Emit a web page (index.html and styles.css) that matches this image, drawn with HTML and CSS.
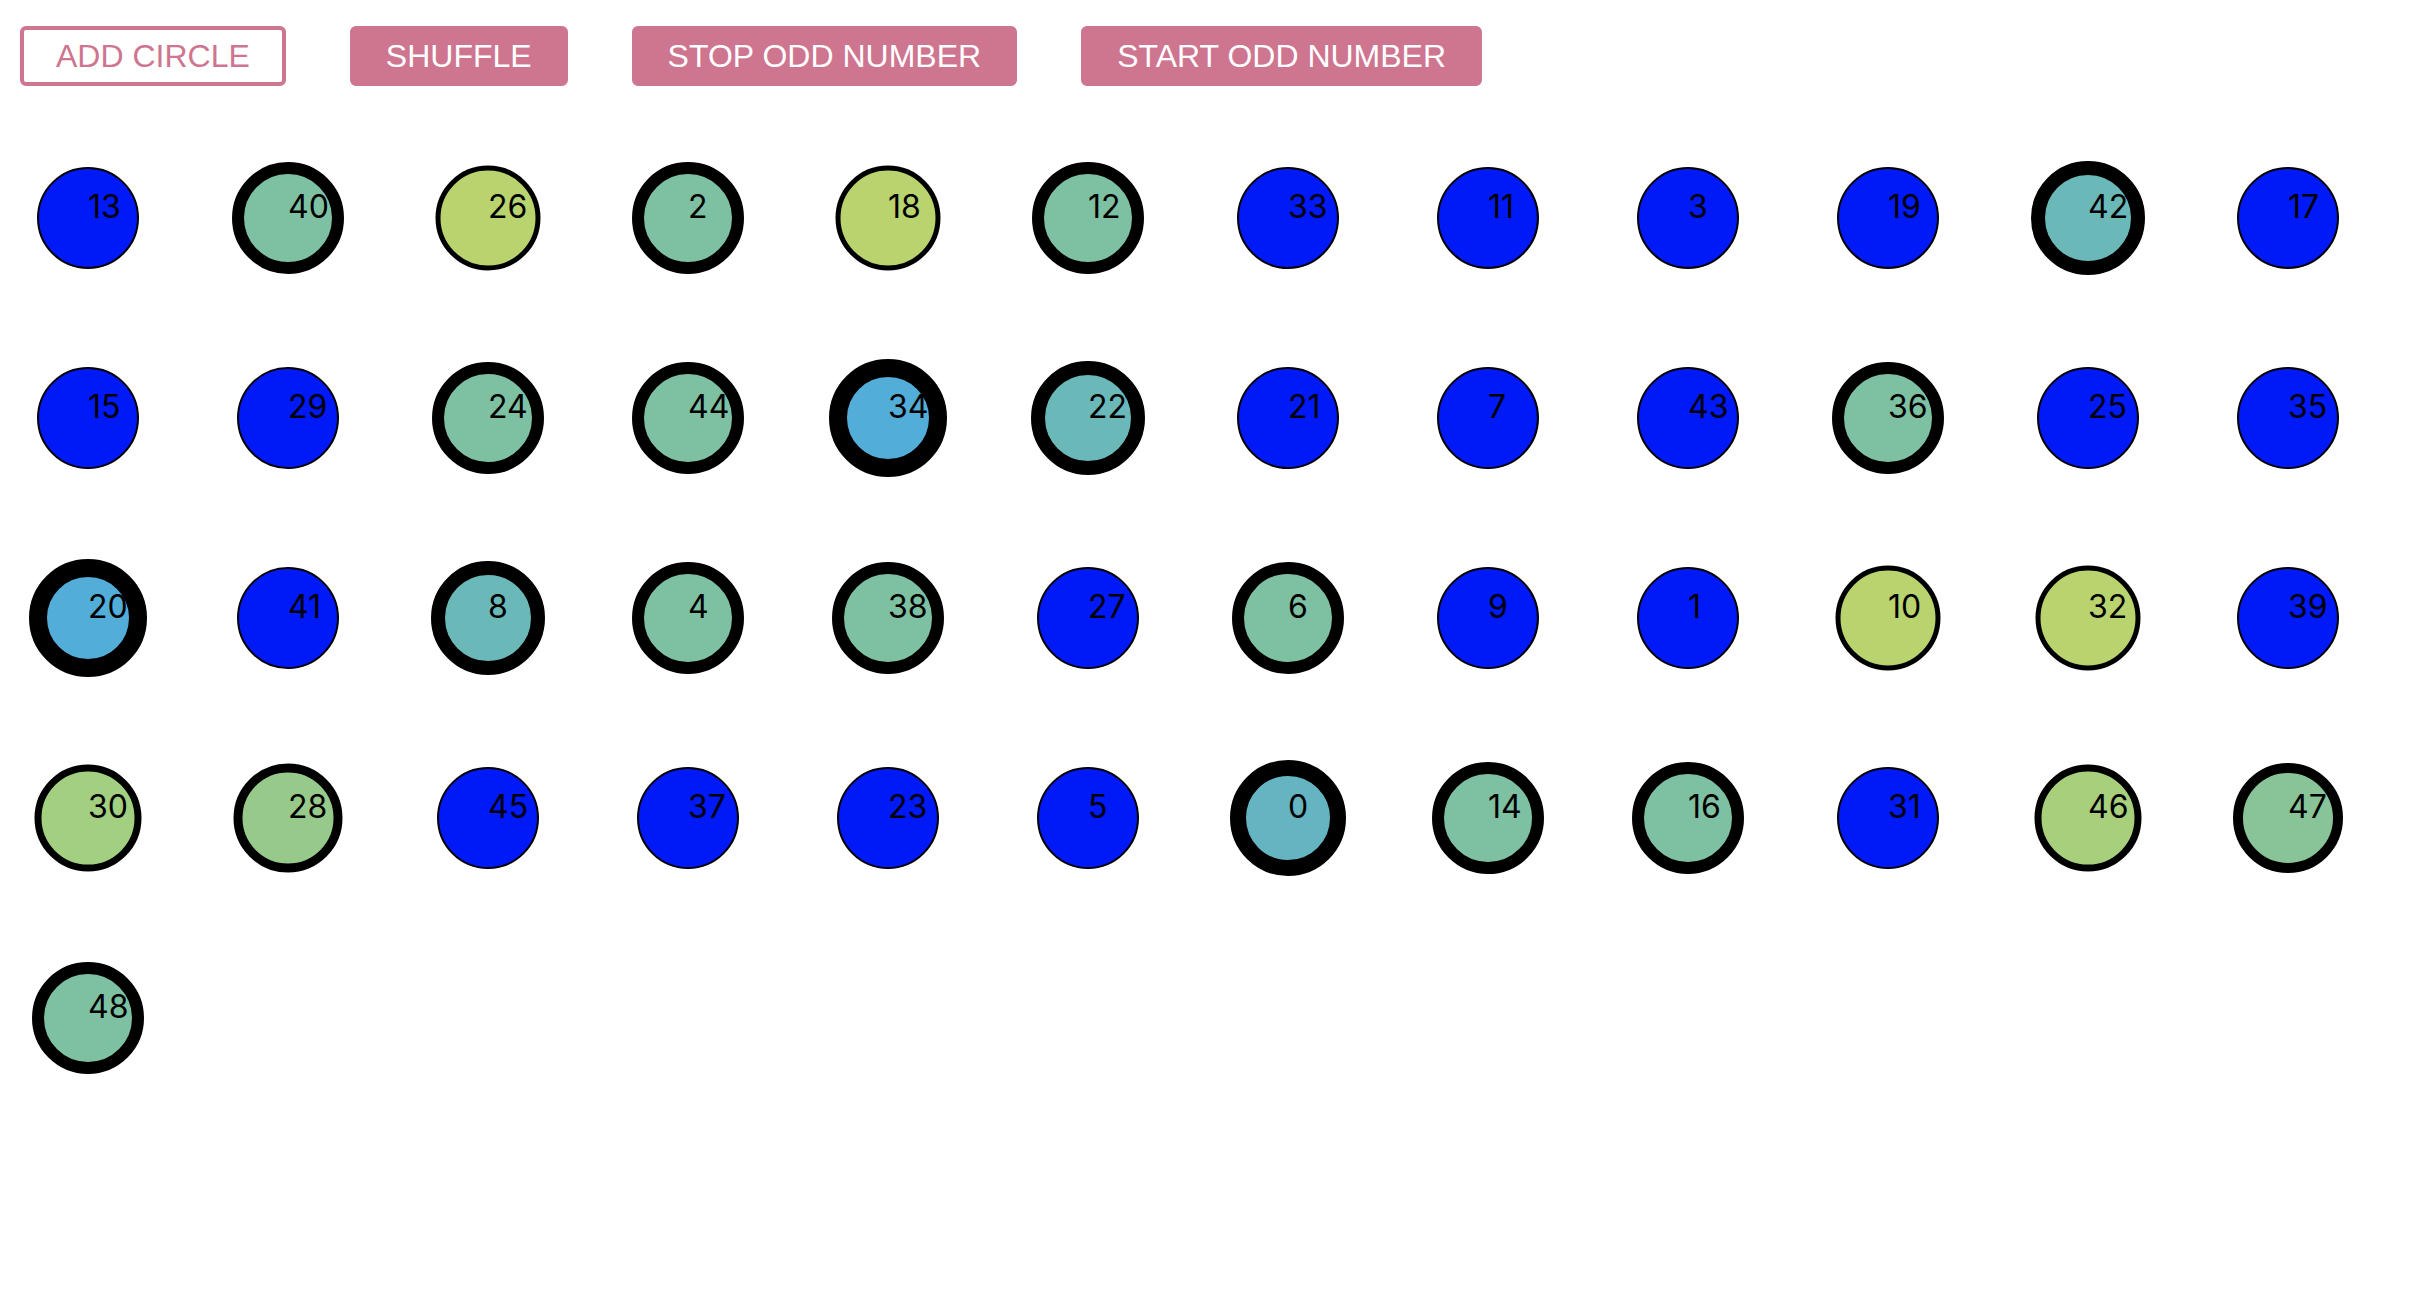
FILE: index.html
```html
<!DOCTYPE html>
<html lang="en">
<head>
<meta charset="utf-8">
<meta name="viewport" content="width=device-width, initial-scale=1">
<title>Circles</title>
<link rel="stylesheet" href="styles.css">
</head>
<body>
<header class="toolbar">
  <button type="button" class="button button-outline">ADD CIRCLE</button>
  <button type="button" class="button">SHUFFLE</button>
  <button type="button" class="button">STOP ODD NUMBER</button>
  <button type="button" class="button">START ODD NUMBER</button>
</header>
<main class="circles">
  <svg class="cell blue"><circle cx="72" cy="72" r="50"/><text x="72" y="72">13</text></svg>
  <svg class="cell green"><circle cx="72" cy="72" r="50"/><text x="72" y="72">40</text></svg>
  <svg class="cell lime"><circle cx="72" cy="72" r="50"/><text x="72" y="72">26</text></svg>
  <svg class="cell green"><circle cx="72" cy="72" r="50"/><text x="72" y="72">2</text></svg>
  <svg class="cell lime"><circle cx="72" cy="72" r="50"/><text x="72" y="72">18</text></svg>
  <svg class="cell green"><circle cx="72" cy="72" r="50"/><text x="72" y="72">12</text></svg>
  <svg class="cell blue"><circle cx="72" cy="72" r="50"/><text x="72" y="72">33</text></svg>
  <svg class="cell blue"><circle cx="72" cy="72" r="50"/><text x="72" y="72">11</text></svg>
  <svg class="cell blue"><circle cx="72" cy="72" r="50"/><text x="72" y="72">3</text></svg>
  <svg class="cell blue"><circle cx="72" cy="72" r="50"/><text x="72" y="72">19</text></svg>
  <svg class="cell teal"><circle cx="72" cy="72" r="50"/><text x="72" y="72">42</text></svg>
  <svg class="cell blue"><circle cx="72" cy="72" r="50"/><text x="72" y="72">17</text></svg>
  <svg class="cell blue"><circle cx="72" cy="72" r="50"/><text x="72" y="72">15</text></svg>
  <svg class="cell blue"><circle cx="72" cy="72" r="50"/><text x="72" y="72">29</text></svg>
  <svg class="cell green"><circle cx="72" cy="72" r="50"/><text x="72" y="72">24</text></svg>
  <svg class="cell green"><circle cx="72" cy="72" r="50"/><text x="72" y="72">44</text></svg>
  <svg class="cell sky"><circle cx="72" cy="72" r="50"/><text x="72" y="72">34</text></svg>
  <svg class="cell teal"><circle cx="72" cy="72" r="50"/><text x="72" y="72">22</text></svg>
  <svg class="cell blue"><circle cx="72" cy="72" r="50"/><text x="72" y="72">21</text></svg>
  <svg class="cell blue"><circle cx="72" cy="72" r="50"/><text x="72" y="72">7</text></svg>
  <svg class="cell blue"><circle cx="72" cy="72" r="50"/><text x="72" y="72">43</text></svg>
  <svg class="cell green"><circle cx="72" cy="72" r="50"/><text x="72" y="72">36</text></svg>
  <svg class="cell blue"><circle cx="72" cy="72" r="50"/><text x="72" y="72">25</text></svg>
  <svg class="cell blue"><circle cx="72" cy="72" r="50"/><text x="72" y="72">35</text></svg>
  <svg class="cell sky"><circle cx="72" cy="72" r="50"/><text x="72" y="72">20</text></svg>
  <svg class="cell blue"><circle cx="72" cy="72" r="50"/><text x="72" y="72">41</text></svg>
  <svg class="cell teal"><circle cx="72" cy="72" r="50"/><text x="72" y="72">8</text></svg>
  <svg class="cell green"><circle cx="72" cy="72" r="50"/><text x="72" y="72">4</text></svg>
  <svg class="cell green"><circle cx="72" cy="72" r="50"/><text x="72" y="72">38</text></svg>
  <svg class="cell blue"><circle cx="72" cy="72" r="50"/><text x="72" y="72">27</text></svg>
  <svg class="cell green"><circle cx="72" cy="72" r="50"/><text x="72" y="72">6</text></svg>
  <svg class="cell blue"><circle cx="72" cy="72" r="50"/><text x="72" y="72">9</text></svg>
  <svg class="cell blue"><circle cx="72" cy="72" r="50"/><text x="72" y="72">1</text></svg>
  <svg class="cell lime"><circle cx="72" cy="72" r="50"/><text x="72" y="72">10</text></svg>
  <svg class="cell lime"><circle cx="72" cy="72" r="50"/><text x="72" y="72">32</text></svg>
  <svg class="cell blue"><circle cx="72" cy="72" r="50"/><text x="72" y="72">39</text></svg>
  <svg class="cell moss"><circle cx="72" cy="72" r="50"/><text x="72" y="72">30</text></svg>
  <svg class="cell fern"><circle cx="72" cy="72" r="50"/><text x="72" y="72">28</text></svg>
  <svg class="cell blue"><circle cx="72" cy="72" r="50"/><text x="72" y="72">45</text></svg>
  <svg class="cell blue"><circle cx="72" cy="72" r="50"/><text x="72" y="72">37</text></svg>
  <svg class="cell blue"><circle cx="72" cy="72" r="50"/><text x="72" y="72">23</text></svg>
  <svg class="cell blue"><circle cx="72" cy="72" r="50"/><text x="72" y="72">5</text></svg>
  <svg class="cell lagoon"><circle cx="72" cy="72" r="50"/><text x="72" y="72">0</text></svg>
  <svg class="cell green"><circle cx="72" cy="72" r="50"/><text x="72" y="72">14</text></svg>
  <svg class="cell green"><circle cx="72" cy="72" r="50"/><text x="72" y="72">16</text></svg>
  <svg class="cell blue"><circle cx="72" cy="72" r="50"/><text x="72" y="72">31</text></svg>
  <svg class="cell olive"><circle cx="72" cy="72" r="50"/><text x="72" y="72">46</text></svg>
  <svg class="cell mint"><circle cx="72" cy="72" r="50"/><text x="72" y="72">47</text></svg>
  <svg class="cell green"><circle cx="72" cy="72" r="50"/><text x="72" y="72">48</text></svg>
</main>
</body>
</html>
```
FILE: styles.css
```css
body {
  margin: 0;
  background: #fff;
  color: #000;
  font-family: Inter, sans-serif;
  font-size: 32px;
}

.toolbar {
  display: flex;
  flex-wrap: wrap;
  gap: 20px 64px;
  padding: 26px 20px 60px;
}

.button {
  padding: 8px 32px;
  border: 4px solid #ce7590;
  border-radius: 6px;
  background: #ce7590;
  color: #fff;
  font-family: "Liberation Sans", Arial, sans-serif;
  font-size: 32px;
  line-height: 36px;
  cursor: pointer;
}

.button-outline {
  background: #fff;
  color: #ce7590;
}

.circles {
  display: grid;
  grid-template-columns: repeat(auto-fill, 200px);
  grid-auto-rows: 200px;
  padding-left: 16px;
}

.cell {
  width: 200px;
  height: 200px;
}

.cell circle {
  stroke: #000;
}

.blue circle { fill: #0019f7; stroke-width: 2px; }
.lime circle { fill: #b9d46f; stroke-width: 5px; }
.olive circle { fill: #a7cf7c; stroke-width: 7px; }
.moss circle { fill: #a3cf81; stroke-width: 7px; }
.fern circle { fill: #97ca8a; stroke-width: 9px; }
.mint circle { fill: #89c498; stroke-width: 10px; }
.green circle { fill: #7ec1a2; stroke-width: 12px; }
.teal circle { fill: #6bb8b9; stroke-width: 14px; }
.lagoon circle { fill: #64b4c1; stroke-width: 16px; }
.sky circle { fill: #53add9; stroke-width: 18px; }
```
